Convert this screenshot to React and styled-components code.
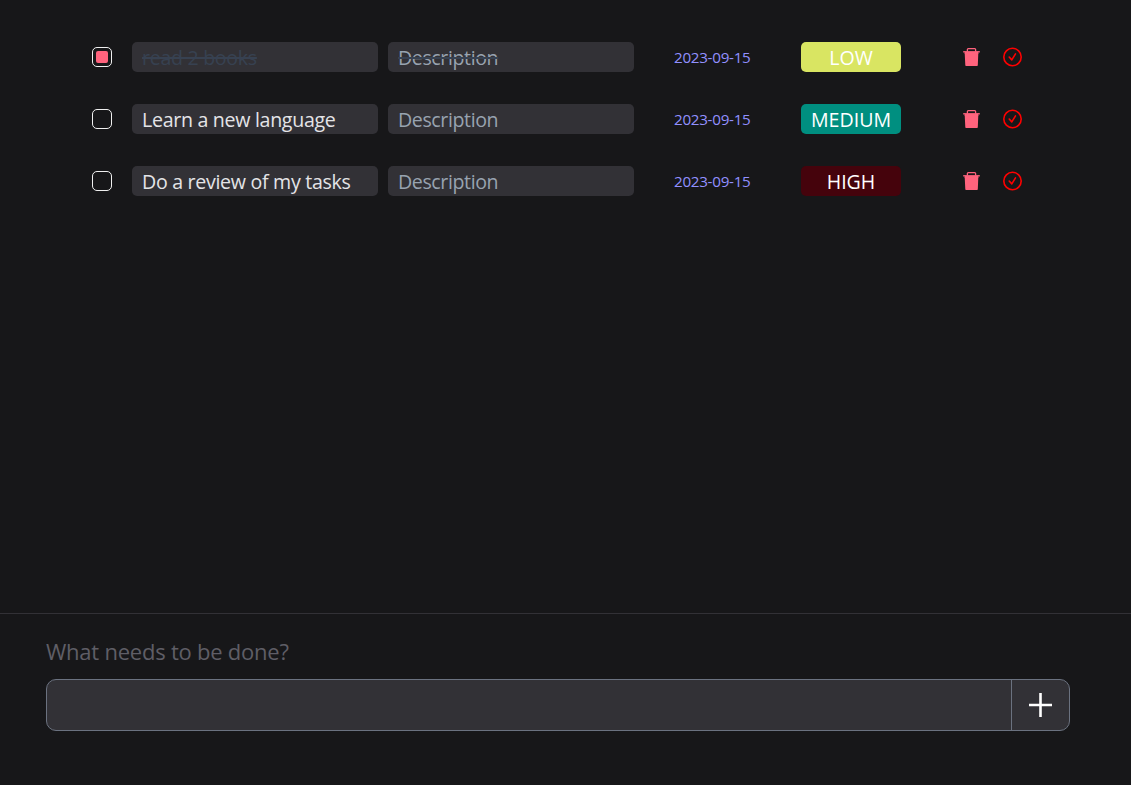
import React from "react";
import styled, { createGlobalStyle, css } from "styled-components";

const GlobalStyle = createGlobalStyle`
  * { box-sizing: border-box; }
  body {
    margin: 0;
    background: #171719;
    font-family: "Segoe UI", "Open Sans", "Noto Sans", sans-serif;
    overflow: hidden;
  }
`;

const Page = styled.div`
  display: flex;
  flex-direction: column;
  height: 785px;
  width: 100%;
`;

const TaskList = styled.main`
  flex: 1;
  display: flex;
  flex-direction: column;
  gap: 32px;
  padding: 42px 92px 0;
`;

const TaskRow = styled.div`
  display: grid;
  grid-template-columns: 40px 256px 286px 127px 161px 40px 20px;
  align-items: center;
  height: 30px;
`;

const Checkbox = styled.button`
  display: flex;
  align-items: center;
  justify-content: center;
  width: 20px;
  height: 20px;
  padding: 0;
  border: 1px solid #f0f0f0;
  border-radius: 5px;
  background: transparent;
`;

const Tick = styled.span`
  width: 12px;
  height: 12px;
  border-radius: 2px;
  background: #ff637d;
`;

const Field = styled.div`
  width: 246px;
  height: 30px;
  padding: 0 10px;
  border-radius: 5px;
  background: #323136;
  line-height: 32px;
  font-size: 19.6px;
  white-space: nowrap;
  letter-spacing: ${(p) => (p.$muted ? -0.4 : -0.3)}px;
  color: ${(p) => (p.$muted ? "#98a3b0" : "#e4e4e7")};
  ${(p) =>
    p.$done &&
    css`
      text-decoration: line-through 2px #374151;
      color: ${p.$muted ? "#98a3b0" : "#374151"};
    `}
`;

const DueDate = styled.time`
  color: #9290ff;
  font-size: 15.2px;
  letter-spacing: -0.28px;
  line-height: 30px;
  height: 30px;
  white-space: nowrap;
`;

const Badge = styled.span`
  width: 100px;
  height: 30px;
  border-radius: 5px;
  background: ${(p) => p.$bg};
  color: #fff;
  font-size: 19.6px;
  line-height: 32px;
  text-align: center;
`;

const IconButton = styled.button`
  display: flex;
  width: 20px;
  height: 20px;
  padding: 0;
  border: 0;
  align-items: center;
  justify-content: center;
  background: none;
  color: ${(p) => p.$color};
`;

const Composer = styled.footer`
  height: 172px;
  border-top: 1px solid #323136;
  padding: 22px 61px 0 46px;
`;

const Prompt = styled.label`
  display: block;
  height: 43px;
  color: #5f5e66;
  font-size: 22px;
  letter-spacing: -0.23px;
  line-height: 30px;
`;

const InputGroup = styled.div`
  display: flex;
  height: 52px;
  border: 1px solid #6b7280;
  border-radius: 10px;
  background: #323136;
  overflow: hidden;
`;

const TaskInput = styled.input`
  flex: 1;
  min-width: 0;
  border: 0;
  outline: 0;
  background: transparent;
  color: #e4e4e7;
  font: inherit;
`;

const AddButton = styled.button`
  display: flex;
  align-items: center;
  justify-content: center;
  width: 58px;
  padding: 0;
  border: 0;
  border-left: 1px solid #6b7280;
  background: transparent;
`;

const TrashIcon = () => (
  <svg width="20" height="20" viewBox="0 0 20 20" fill="currentColor">
    <path d="M2.7 6h13.6l-0.5 12.2a0.8 0.8 0 0 1-0.8 0.8H4.1a0.8 0.8 0 0 1-0.8-0.8z" />
    <path d="M1.2 4.8h16.6" stroke="currentColor" strokeWidth="1.4" />
    <path d="M5.4 4.7V2.5q0-.9.9-.9h6.4q.9 0 .9.9v2.2" fill="none" stroke="currentColor" strokeWidth="1.3" />
    <path d="M2.7 5h13.6v2H2.7z" />
  </svg>
);

const CheckCircleIcon = () => (
  <svg width="20" height="20" viewBox="0 0 20 20" fill="none" stroke="currentColor" strokeWidth="1.6">
    <circle cx="10.5" cy="10" r="8.7" />
    <path d="M7.2 10l2.6 2.9 3.7-6" strokeLinecap="round" strokeLinejoin="round" />
  </svg>
);

const PlusIcon = () => (
  <svg width="26" height="26" viewBox="0 0 26 26" stroke="#fff" strokeWidth="2.6">
    <path d="M12.5 1v24M1 13h23" />
  </svg>
);

const tasks = [
  { title: "read 2 books", priority: "LOW", color: "#d9e562", done: true },
  { title: "Learn a new language", priority: "MEDIUM", color: "#008f80" },
  { title: "Do a review of my tasks", priority: "HIGH", color: "#45030c" },
];

export default function App() {
  return (
    <Page>
      <GlobalStyle />
      <TaskList>
        {tasks.map((t) => (
          <TaskRow key={t.title}>
            <Checkbox>{t.done && <Tick />}</Checkbox>
            <Field $done={t.done}>{t.title}</Field>
            <Field $done={t.done} $muted>Description</Field>
            <DueDate>2023-09-15</DueDate>
            <Badge $bg={t.color}>{t.priority}</Badge>
            <IconButton $color="#ff637d"><TrashIcon /></IconButton>
            <IconButton $color="#ff0000"><CheckCircleIcon /></IconButton>
          </TaskRow>
        ))}
      </TaskList>
      <Composer>
        <Prompt htmlFor="task">What needs to be done?</Prompt>
        <InputGroup>
          <TaskInput id="task" />
          <AddButton><PlusIcon /></AddButton>
        </InputGroup>
      </Composer>
    </Page>
  );
}
